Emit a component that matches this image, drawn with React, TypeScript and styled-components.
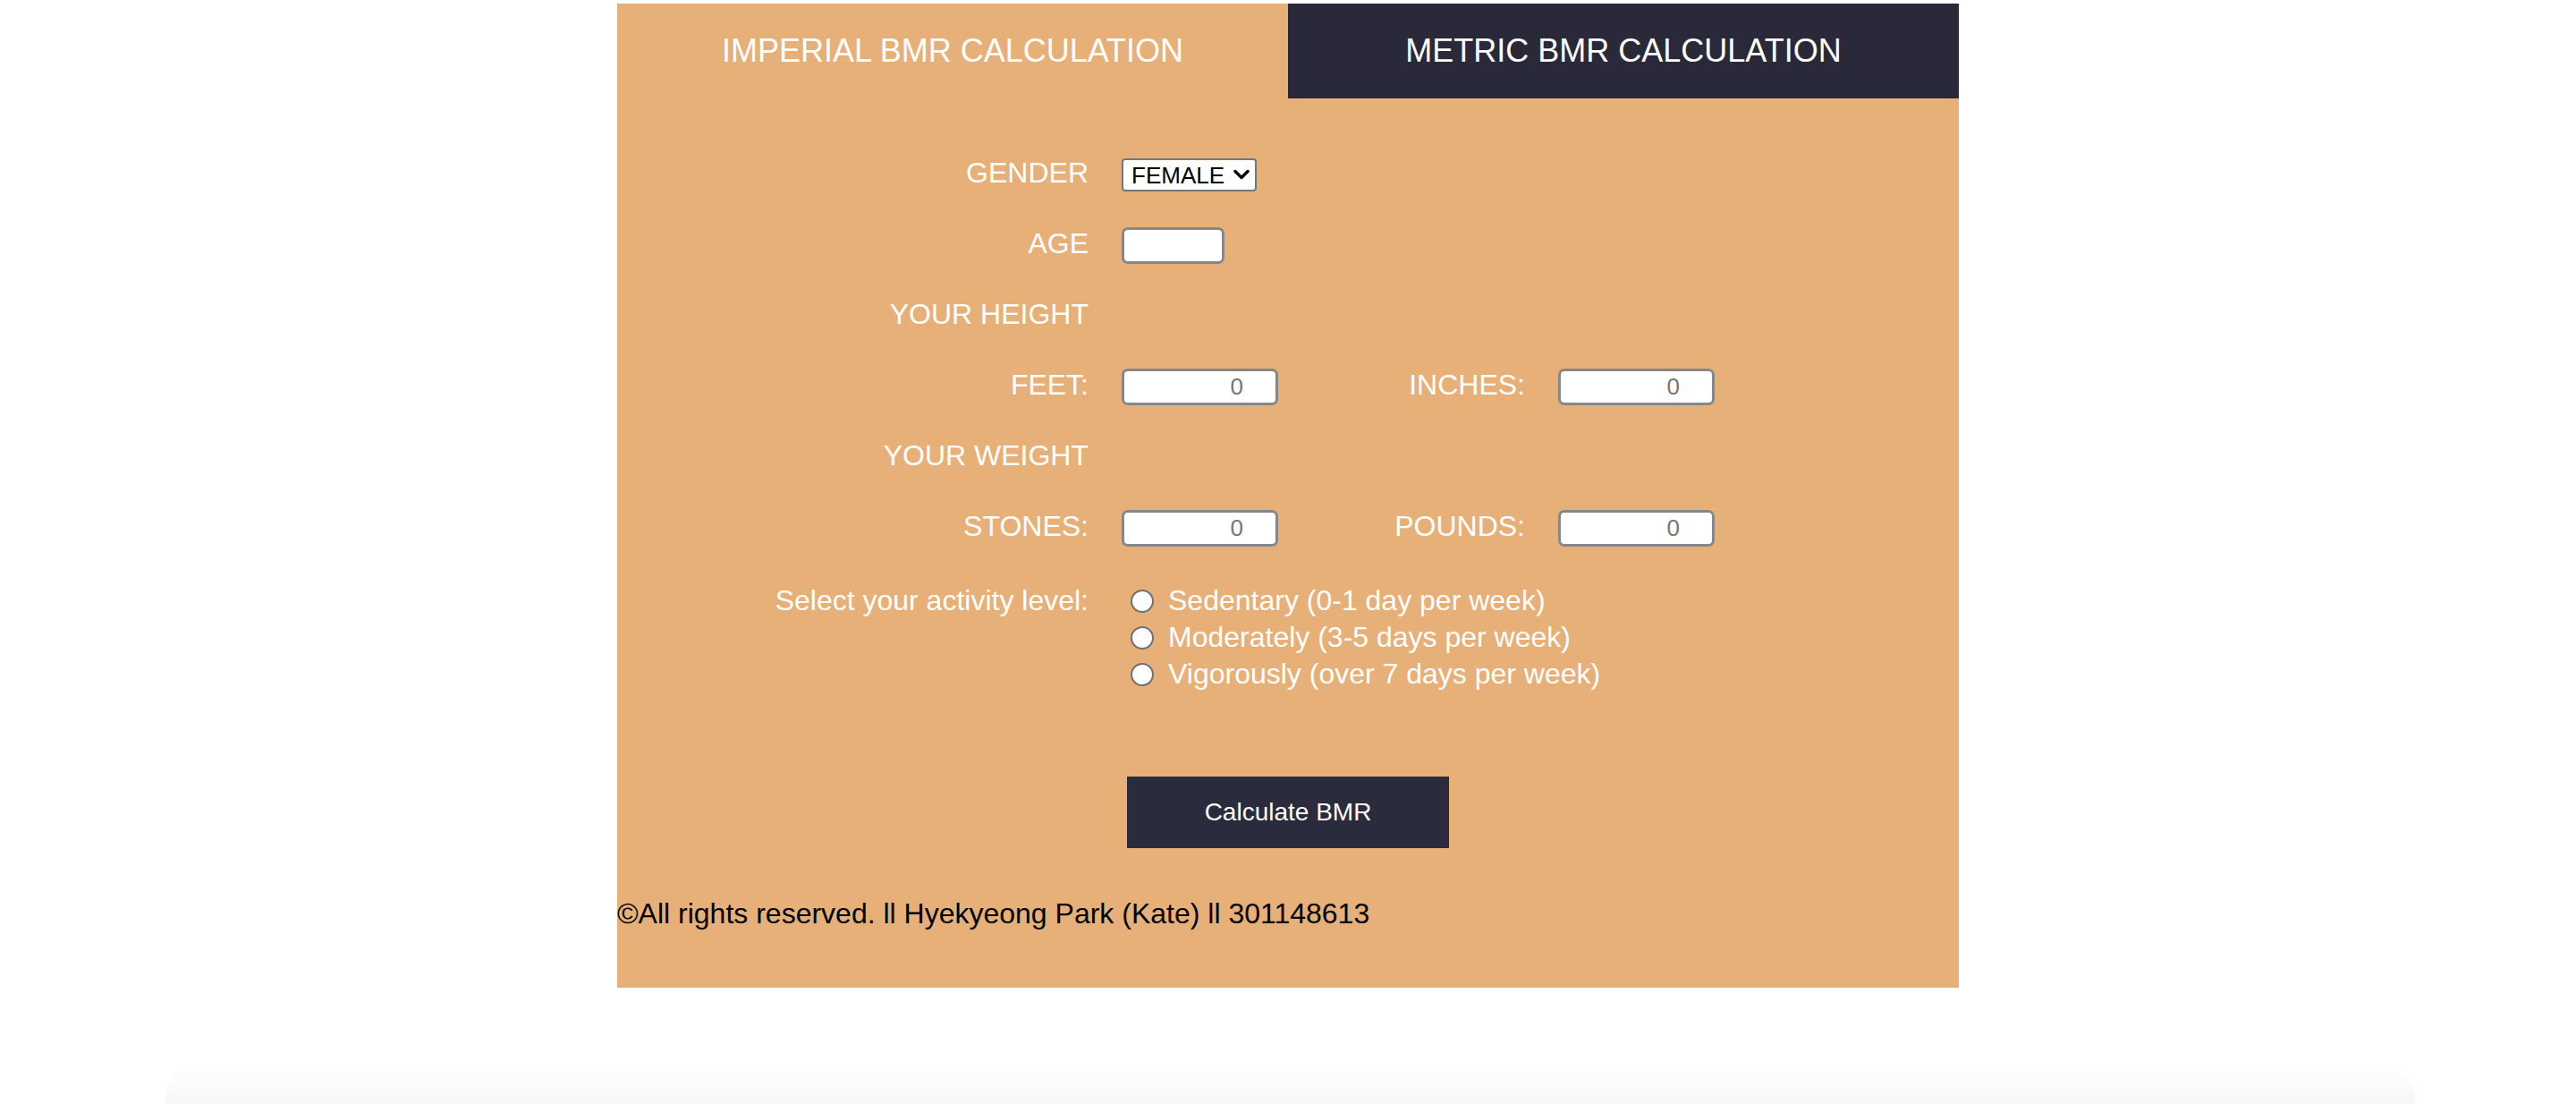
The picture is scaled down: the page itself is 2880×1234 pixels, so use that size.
import { useState } from "react";
import styled, { createGlobalStyle } from "styled-components";

const GlobalStyle = createGlobalStyle`
  html, body {
    margin: 0;
    padding: 0;
    background: #ffffff;
    font-family: "Liberation Sans", Arial, Helvetica, sans-serif;
  }
`;

const Page = styled.div`
  padding-top: 4px;
  min-height: 1230px;
`;

const Card = styled.div`
  width: 1500px;
  margin: 0 auto;
  background: #e6b078;
  padding-bottom: 64px;
`;

const Tabs = styled.div`
  display: flex;
`;

const Tab = styled.div<{ $active?: boolean }>`
  width: 750px;
  height: 106px;
  display: flex;
  align-items: center;
  justify-content: center;
  font-size: 36px;
  color: #ffffff;
  background: ${(p) => (p.$active ? "#e6b078" : "#2a2939")};
  cursor: pointer;
`;

const Form = styled.div`
  display: grid;
  grid-template-columns: 527px 175px 239px 175px;
  grid-auto-rows: minmax(41px, auto);
  column-gap: 37px;
  row-gap: 38px;
  padding-top: 65px;
`;

const Label = styled.div<{ $col?: number; $top?: boolean }>`
  grid-column: ${(p) => p.$col ?? 1};
  height: 41px;
  box-sizing: border-box;
  display: flex;
  align-items: ${(p) => (p.$top ? "flex-start" : "center")};
  justify-content: flex-end;
  padding: ${(p) => (p.$top ? "6px 0 0" : "0 0 5px")};
  font-size: 32px;
  line-height: 32px;
  color: #ffffff;
  white-space: nowrap;
`;

const Field = styled.div<{ $col?: number; $span?: number }>`
  grid-column: ${(p) => p.$col ?? 2} / span ${(p) => p.$span ?? 1};
  display: flex;
  align-items: center;
  min-height: 41px;
`;

const SelectWrap = styled.div`
  position: relative;
  width: 151px;
  height: 37px;
`;

const Select = styled.select`
  appearance: none;
  width: 100%;
  height: 100%;
  box-sizing: border-box;
  border: 2px solid #767676;
  border-radius: 4px;
  background: #ffffff;
  padding: 0 0 0 9px;
  font-family: "Liberation Sans", Arial, sans-serif;
  font-size: 26px;
  color: #000000;
`;

const Chevron = styled.svg`
  position: absolute;
  right: 8px;
  top: 11px;
  width: 18px;
  height: 14px;
  pointer-events: none;
`;

const TextInput = styled.input<{ $w: number }>`
  width: ${(p) => p.$w}px;
  height: 41px;
  box-sizing: border-box;
  border: 3px solid #878787;
  border-radius: 7px;
  background: #ffffff;
  padding: 0 36px 0 8px;
  font-family: "Liberation Sans", Arial, sans-serif;
  font-size: 26px;
  color: #767676;
  text-align: right;
  outline: none;
`;

const Options = styled.div`
  display: flex;
  flex-direction: column;
  padding-top: 2px;
`;

const Option = styled.label`
  height: 41px;
  display: flex;
  align-items: center;
  font-size: 32px;
  color: #ffffff;
  white-space: nowrap;
  cursor: pointer;
`;

const Radio = styled.input`
  appearance: none;
  width: 26px;
  height: 26px;
  margin: 0 16px 0 10px;
  box-sizing: border-box;
  border: 2px solid #707070;
  border-radius: 50%;
  background: #ffffff;
  &:checked {
    border: 8px solid #1a73e8;
  }
`;

const ButtonRow = styled.div`
  display: flex;
  justify-content: center;
  margin-top: 94px;
`;

const Button = styled.button`
  width: 360px;
  height: 80px;
  border: none;
  background: #2b2b3e;
  color: #ffffff;
  font-family: "Liberation Sans", Arial, sans-serif;
  font-size: 28px;
  cursor: pointer;
`;

const Footer = styled.div`
  margin-top: 55px;
  font-size: 32px;
  line-height: 37px;
  color: #000000;
`;

const BottomShade = styled.div`
  position: fixed;
  left: 184px;
  right: 180px;
  bottom: 0;
  height: 44px;
  background: linear-gradient(#ffffff, #f7f7f7);
  border-radius: 40px 40px 0 0;
`;

const activities = [
  "Sedentary (0-1 day per week)",
  "Moderately (3-5 days per week)",
  "Vigorously (over 7 days per week)",
];

export default function App() {
  const [activity, setActivity] = useState<string>("");
  const [tab, setTab] = useState<"imperial" | "metric">("imperial");

  return (
    <Page>
      <GlobalStyle />
      <Card>
        <Tabs>
          <Tab $active={tab === "imperial"} onClick={() => setTab("imperial")}>
            IMPERIAL BMR CALCULATION
          </Tab>
          <Tab $active={tab === "metric"} onClick={() => setTab("metric")}>
            METRIC BMR CALCULATION
          </Tab>
        </Tabs>

        <Form>
          <Label>GENDER</Label>
          <Field>
            <SelectWrap>
              <Select defaultValue="female">
                <option value="female">FEMALE</option>
                <option value="male">MALE</option>
              </Select>
              <Chevron viewBox="0 0 18 14">
                <path
                  d="M2 3.5 L9 10.5 L16 3.5"
                  fill="none"
                  stroke="#000"
                  strokeWidth="3.4"
                  strokeLinecap="round"
                  strokeLinejoin="round"
                />
              </Chevron>
            </SelectWrap>
          </Field>

          <Label>AGE</Label>
          <Field>
            <TextInput $w={115} type="text" />
          </Field>

          <Label>YOUR HEIGHT</Label>
          <Field />

          <Label>FEET:</Label>
          <Field>
            <TextInput $w={175} type="text" defaultValue="0" />
          </Field>
          <Label $col={3}>INCHES:</Label>
          <Field $col={4}>
            <TextInput $w={175} type="text" defaultValue="0" />
          </Field>

          <Label>YOUR WEIGHT</Label>
          <Field />

          <Label>STONES:</Label>
          <Field>
            <TextInput $w={175} type="text" defaultValue="0" />
          </Field>
          <Label $col={3}>POUNDS:</Label>
          <Field $col={4}>
            <TextInput $w={175} type="text" defaultValue="0" />
          </Field>

          <Label $top>Select your activity level:</Label>
          <Field $span={3}>
            <Options>
              {activities.map((a) => (
                <Option key={a}>
                  <Radio
                    type="radio"
                    name="activity"
                    checked={activity === a}
                    onChange={() => setActivity(a)}
                  />
                  {a}
                </Option>
              ))}
            </Options>
          </Field>
        </Form>

        <ButtonRow>
          <Button>Calculate BMR</Button>
        </ButtonRow>

        <Footer>©All rights reserved. ll Hyekyeong Park (Kate) ll 301148613</Footer>
      </Card>
      <BottomShade />
    </Page>
  );
}
